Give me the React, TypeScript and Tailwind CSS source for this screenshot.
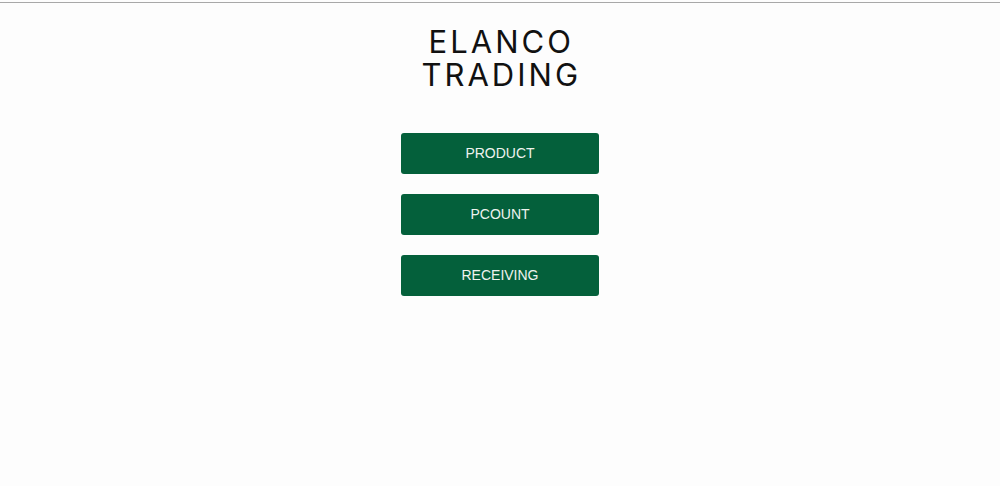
export default function App() {
  const items = ['PRODUCT', 'PCOUNT', 'RECEIVING']

  return (
    <div className="min-h-[486px] bg-[#fdfdfd] pt-[2px]">
      <div className="border-t border-[#a8a8a8]" />
      <div className="flex flex-col items-center">
        <h1 className="mt-[22px] flex flex-col items-center pl-[2.5px] font-['Inter',sans-serif] text-[31px] font-normal tracking-[3px] text-[#111]">
          <span className="block h-[33px] leading-[33px]">ELANCO</span>
          <span className="block h-[33px] leading-[33px]">TRADING</span>
        </h1>
        <div className="mt-[42px] flex flex-col gap-[20px]">
          {items.map((label) => (
            <button
              key={label}
              className="h-[41px] w-[198px] rounded-[3px] bg-[#04603b] font-['Liberation_Sans',sans-serif] text-[14px] text-[#eef3ee]"
            >
              {label}
            </button>
          ))}
        </div>
      </div>
    </div>
  )
}
